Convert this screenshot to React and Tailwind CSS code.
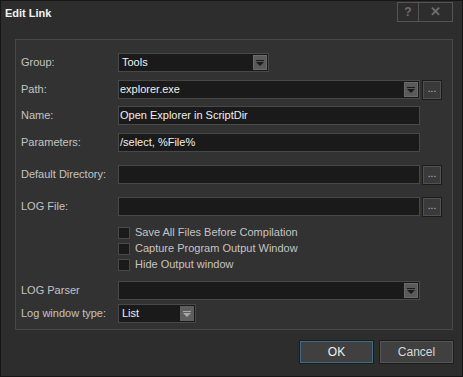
import React from "react";

const font = { fontFamily: '"Liberation Sans", Arial, sans-serif' };

function Arrow({ color = "#1a1a1a" }) {
  return (
    <svg width="8" height="6" viewBox="0 0 8 6">
      <rect x="0" y="0" width="8" height="1" fill={color} />
      <path d="M0 2 H8 L4 6 Z" fill={color} />
    </svg>
  );
}

function Label({ children }) {
  return <div className="w-[97px] shrink-0 text-[11px] text-[#c4c4c4] leading-none">{children}</div>;
}

function Input({ value, w = "w-[302px]", h = "h-[19px]" }) {
  return (
    <div className={`${w} ${h} shrink-0 bg-[#1a1a1a] border border-[#484848] flex items-center pl-[1px] text-[11px] text-[#f0f0f0] leading-none`}>
      {value}
    </div>
  );
}

function Combo({ value, w = "w-[302px]", light }) {
  return (
    <div className={`${w} h-[19px] shrink-0 bg-[#1a1a1a] border border-[#484848] flex items-center justify-between text-[11px] text-[#f0f0f0] leading-none`}>
      <span className="pl-[3px]">{value}</span>
      <div
        className={`w-[14px] h-[15px] mr-[1px] flex items-center justify-center ${
          light ? "bg-[#5e5e5e]" : "bg-[#5a5a5a] border border-[#6a6a6a]"
        }`}
      >
        <Arrow color={light ? "#a8a8a8" : "#1a1a1a"} />
      </div>
    </div>
  );
}

function Dots() {
  return (
    <div className="w-[20px] h-[20px] shrink-0 ml-[2px] bg-[#3a3a3a] border border-[#1c1c1c] shadow-[inset_0_0_0_1px_#505050] flex items-center justify-center text-[10px] text-[#c0c0c0] leading-none pb-[2px]">
      ...
    </div>
  );
}

function Check({ label }) {
  return (
    <div className="flex items-center h-[13px]">
      <div className="w-[12px] h-[12px] bg-[#1a1a1a] border border-[#484848]" />
      <span className="ml-[5px] text-[11px] text-[#c4c4c4] leading-none">{label}</span>
    </div>
  );
}

export default function App() {
  return (
    <div style={font} className="w-[463px] h-[377px] bg-[#2d2d2d] border border-[#161616] flex flex-col">
      <div className="h-[38px] flex items-start justify-between">
        <div className="pl-[4px] pt-[7px] text-[11px] font-bold text-[#f2f2f2] leading-none">Edit Link</div>
        <div className="mt-[1px] mr-[9px] flex h-[20px] border border-[#545454]">
          <div className="w-[21px] flex items-center justify-center text-[12px] font-bold text-[#6e6e6e] border-r border-[#545454]">?</div>
          <div className="w-[33px] flex items-center justify-center text-[13px] font-bold text-[#6e6e6e]">✕</div>
        </div>
      </div>
      <div className="ml-[14px] w-[438px] h-[291px] bg-[#323232] border border-[#484848] flex flex-col pl-[5px] pt-[13px]">
        <div className="flex items-center h-[19px]">
          <Label>Group:</Label>
          <Combo value="Tools" w="w-[151px]" />
        </div>
        <div className="flex items-center h-[19px] mt-[8px]">
          <Label>Path:</Label>
          <Combo value={<span className="-ml-[2px]">explorer.exe</span>} />
          <Dots />
        </div>
        <div className="flex items-center h-[19px] mt-[7px]">
          <Label>Name:</Label>
          <Input value="Open Explorer in ScriptDir" />
        </div>
        <div className="flex items-center h-[19px] mt-[8px]">
          <Label>Parameters:</Label>
          <Input value="/select, %File%" />
        </div>
        <div className="flex items-center h-[19px] mt-[13px]">
          <Label>Default Directory:</Label>
          <Input value="" />
          <Dots />
        </div>
        <div className="flex items-center h-[19px] mt-[13px]">
          <Label>LOG File:</Label>
          <Input value="" />
          <Dots />
        </div>
        <div className="flex flex-col ml-[97px] mt-[10px] gap-[3px]">
          <Check label="Save All Files Before Compilation" />
          <Check label="Capture Program Output Window" />
          <Check label="Hide Output window" />
        </div>
        <div className="flex items-center h-[19px] mt-[10px]">
          <Label>LOG Parser</Label>
          <Combo value="" />
        </div>
        <div className="flex items-center h-[19px] mt-[4px]">
          <Label>Log window type:</Label>
          <Combo value="List" w="w-[78px]" light />
        </div>
      </div>
      <div className="flex justify-end mt-[10px] mr-[8px] gap-[5px]">
        <div className="w-[75px] h-[24px] bg-[#404040] border border-[#1c1c1c] shadow-[inset_0_0_0_1px_#3b6c84] flex items-center justify-center text-[12px] text-[#f0f0f0]">OK</div>
        <div className="w-[75px] h-[24px] bg-[#404040] border border-[#1c1c1c] shadow-[inset_0_0_0_1px_#555555] flex items-center justify-center text-[12px] text-[#d8d8d8]">Cancel</div>
      </div>
    </div>
  );
}
